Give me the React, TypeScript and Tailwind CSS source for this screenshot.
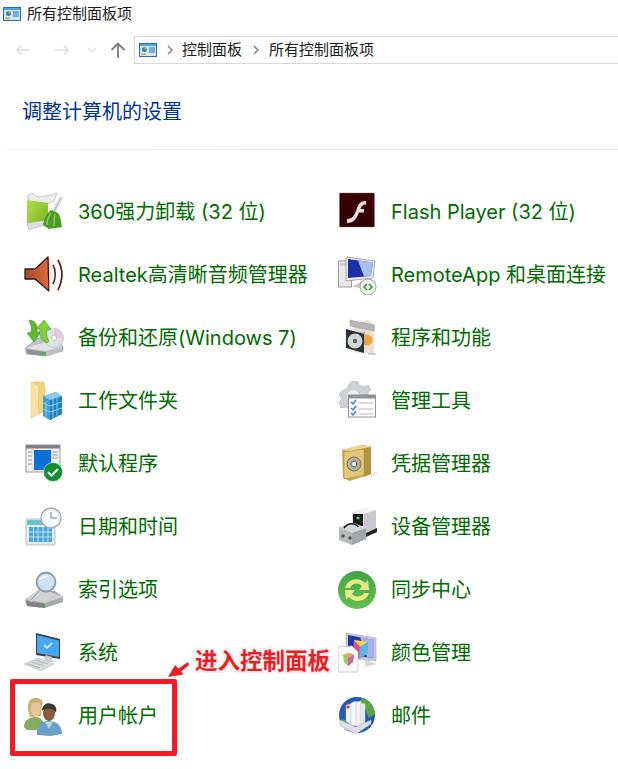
import type { ReactNode } from 'react';

const Ico = ({ children }: { children: ReactNode }) => (
  <svg viewBox="0 0 40 40" className="w-10 h-10 shrink-0">
    {children}
  </svg>
);

const Uninstall = () => (
  <Ico>
    <defs>
      <linearGradient id="un" x1="0" y1="0" x2="1" y2="1">
        <stop offset="0" stopColor="#b8e04e" />
        <stop offset="1" stopColor="#6eb01c" />
      </linearGradient>
    </defs>
    <path d="M3 4 L8 1 L14 5 L28 3 L33 1 L30 9 L24 12 L5 9 Z" fill="#ededed" stroke="#b5b5b5" strokeWidth="0.7" />
    <path d="M3 8 L24 11 L24 31 L5 37 L3 33 Z" fill="url(#un)" />
    <path d="M3 31 L24 28 L24 32 L5 38 Z" fill="#dedede" stroke="#aaa" strokeWidth="0.5" />
    <path d="M37 6 L29 21" stroke="#e4e4e4" strokeWidth="4.5" strokeLinecap="round" />
    <path d="M37 6 L29 21" stroke="#9e9e9e" strokeWidth="0.8" />
    <path d="M27 18 C22 22 20 28 19 33 L25 37 L38 35 C37 28 36 21 32 20 Z" fill="#4e9a28" />
    <path d="M27 21 C24 25 23 29 23 33 M31 22 C30 26 30 30 30 34" stroke="#8fd05c" strokeWidth="1.4" fill="none" />
  </Ico>
);

const Flash = () => (
  <Ico>
    <defs>
      <linearGradient id="fl" x1="0" y1="0" x2="0" y2="1">
        <stop offset="0" stopColor="#3c0000" />
        <stop offset="1" stopColor="#2e0000" />
      </linearGradient>
    </defs>
    <rect x="1.5" y="1" width="35" height="34" fill="url(#fl)" stroke="#777" strokeWidth="0.4" />
    <path d="M9 27 C15 27 17 22 19 16 C20.5 11.5 23 9 28 9 L28 12.5 C24.5 12.5 23.5 14.5 22.5 17 L26 17 L26 20.5 L21 20.5 C19 26 16 31 9 31 Z" fill="#ecdcdc" />
  </Ico>
);

const Speaker = () => (
  <Ico>
    <defs>
      <linearGradient id="sp" x1="0" y1="0" x2="1" y2="0">
        <stop offset="0" stopColor="#a8482a" />
        <stop offset="1" stopColor="#dc6a3e" />
      </linearGradient>
    </defs>
    <path d="M1 14 L11 14 L24 2 L25 36 L11 24 L1 24 Z" fill="url(#sp)" stroke="#2c1a14" strokeWidth="1.3" strokeLinejoin="round" />
    <path d="M26 3 L26 36" stroke="#f2d6c8" strokeWidth="1.2" />
    <path d="M29 10 C32 15 32 23 29 29" stroke="#5a2a1a" strokeWidth="1.6" fill="none" />
    <path d="M34 5 C39 14 39 25 34 35" stroke="#5a2a1a" strokeWidth="1.8" fill="none" />
  </Ico>
);

const Remote = () => (
  <Ico>
    <rect x="0.5" y="6" width="13" height="26" fill="#e9e9e9" stroke="#9a9a9a" />
    <rect x="2" y="8" width="10" height="3" fill="#c9d3dd" />
    <path d="M8 2 L37 6 L35 23 L8 26 Z" fill="#f0f0f0" stroke="#8a8a8a" strokeWidth="0.7" />
    <path d="M10 4 L35 7.5 L33 21 L10 23 Z" fill="#1a30a8" />
    <path d="M20 5.5 L35 7.5 L33 21 L26 21.5 Z" fill="#a9bdf0" />
    <path d="M14 32 L24 26 L24 33 Z" fill="#c9c9c9" />
    <circle cx="30" cy="32" r="8" fill="#f4f4f4" stroke="#a2a2a2" />
    <path d="M29 29 L26 32 L29 35" stroke="#2f9e2f" strokeWidth="1.6" fill="none" />
    <path d="M31 29 L34 32 L31 35" stroke="#2f9e2f" strokeWidth="1.6" fill="none" />
  </Ico>
);

const Backup = () => (
  <Ico>
    <path d="M1 30 L14 20 L30 20 L39 28 L39 33 L22 38 L3 36 Z" fill="#bfc3c6" stroke="#8c8c8c" strokeWidth="0.5" />
    <path d="M2 30 L22 33 L39 28 L22 24 Z" fill="#e0e2e4" />
    <path d="M2 31 L22 34 L22 38 L3 36 Z" fill="#8f9396" />
    <rect x="18" y="34" width="2" height="3" fill="#38c038" />
    <circle cx="30" cy="20" r="9.5" fill="#dfe3e6" stroke="#a8a8a8" strokeWidth="0.5" />
    <path d="M30 20 L30 10.5 A9.5 9.5 0 0 1 39 20 Z" fill="#e2c8dc" />
    <circle cx="30" cy="20" r="2.5" fill="#fff" stroke="#9c9c9c" strokeWidth="0.5" />
    <path d="M6 2 C13 4 14 8 13 14 L17 14 L10 24 L3 15 L7 14 C8 10 7 6 5 4 Z" fill="#5cba2e" stroke="#3d8f1c" strokeWidth="0.5" />
    <path d="M23 25 C16 22 15 17 16 11 L12 11 L20 2 L27 11 L23 12 C22 16 23 20 25 23 Z" fill="#7ccf3e" stroke="#3d8f1c" strokeWidth="0.5" />
  </Ico>
);

const Programs = () => (
  <Ico>
    <path d="M15 6 L30 2 L38 7 L36 13 L36 36 L16 34 Z" fill="#e4e1da" />
    <path d="M12 2 L36 7 L36 13 L12 8 Z" fill="#b6b6b4" stroke="#8a8a8a" strokeWidth="0.4" />
    <rect x="18" y="14" width="9" height="12" fill="#a9bd97" />
    <circle cx="29" cy="22" r="5.5" fill="#eda445" />
    <path d="M8 11 L26 16 L26 35 L8 30 Z" fill="#2a3036" />
    <circle cx="17" cy="23" r="7.5" fill="#d3d6d9" />
    <circle cx="17" cy="23" r="2.2" fill="#5a6066" />
    <path d="M30 35 L39 35 L37 37 L30 37 Z" fill="#cfcfcf" />
  </Ico>
);

const Folder = () => (
  <Ico>
    <path d="M7 1 L20 1 L21 8 L21 30 L7 37 Z" fill="#efd27e" stroke="#d4b25a" strokeWidth="0.5" />
    <path d="M7 1 L7 37 L14 33 L14 5 Z" fill="#f7e3a3" />
    <path d="M19 15 L32 11 L38 15 L38 33 L26 39 L19 35 Z" fill="#3d9cd4" />
    <path d="M26 19 L38 15 L38 33 L26 39 Z" fill="#1f7fbb" />
    <path d="M19 15 L32 11 L38 15 L26 19 Z" fill="#8ccbed" />
    <path d="M22 20 V36 M29 18 V37 M33 17 V35 M19 22 L26 25 L38 21 M19 28 L26 31 L38 27" stroke="#a5dcf5" strokeWidth="0.8" fill="none" />
  </Ico>
);

const Tools = () => (
  <Ico>
    <path d="M14 0 L20 0 L21 4 L26 6 L30 4 L33 8 L30 12 L30 14 L14 22 L14 30 L8 26 L3 27 L1 21 L4 18 L1 13 L5 9 L9 8 L11 3 Z" fill="#cfd2d4" stroke="#a9abad" strokeWidth="0.5" />
    <circle cx="15" cy="15" r="6" fill="#eef0f1" />
    <rect x="10.5" y="14" width="27" height="22" fill="#fff" stroke="#8f9296" strokeWidth="1" />
    <rect x="10.5" y="14" width="27" height="3.5" fill="#8f9296" />
    <path d="M13 21 L15 23 L18 19 M13 27 L15 29 L18 25 M13 32 L15 34 L18 30" stroke="#2f7ed8" strokeWidth="1.4" fill="none" />
    <path d="M21 22 H35 M21 28 H35 M21 33 H35" stroke="#b4b7ba" strokeWidth="1.2" />
  </Ico>
);

const Defaults = () => (
  <Ico>
    <rect x="2" y="1" width="34" height="27" fill="#f0f0f0" stroke="#9c9c9c" />
    <rect x="2" y="1" width="34" height="3.5" fill="#7e8288" />
    <path d="M4 8 H8 M4 12 H8 M4 16 H8 M4 20 H8 M28 8 H34 M28 11 H34 M28 14 H34" stroke="#9a9a9a" strokeWidth="1" />
    <rect x="10" y="6" width="17" height="20" fill="#0b6fd8" />
    <circle cx="29" cy="28" r="9.5" fill="#0e8f2e" stroke="#e9f5ea" strokeWidth="0.6" />
    <path d="M24 28 L27.5 31.5 L34 25" stroke="#fff" strokeWidth="2.2" fill="none" />
  </Ico>
);

const Safe = () => (
  <Ico>
    <path d="M4 6 L24 1 L33 3 L33 30 L12 37 L5 34 Z" fill="#c9a54c" />
    <path d="M24 1 L33 3 L33 30 L26 33 Z" fill="#b39340" />
    <path d="M4 6 L24 1 L33 3 L12 7 Z" fill="#ead68c" />
    <path d="M6 8 L26 5 L26 31 L6 35 Z" fill="#e0c878" stroke="#b4933e" strokeWidth="0.5" />
    <circle cx="16" cy="20" r="7" fill="#b0ae9e" stroke="#77735f" />
    <circle cx="16" cy="20" r="2.8" fill="#e4e4e0" stroke="#77735f" />
    <path d="M33 30 L39 27 L39 29 L33 33 Z" fill="#e2e2e2" />
  </Ico>
);

const Calendar = () => (
  <Ico>
    <rect x="2" y="12" width="29" height="26" rx="1" fill="#e8edf0" stroke="#b9bfc4" />
    <rect x="3" y="13" width="27" height="5" fill="#6ac1cf" />
    <path d="M5 20 H28 V35 H5 Z" fill="#48a9d8" />
    <path d="M9.5 20 V35 M14 20 V35 M19 20 V35 M24 20 V35 M5 25 H28 M5 30 H28" stroke="#d8eef8" strokeWidth="0.8" />
    <circle cx="27" cy="11" r="10" fill="#eceff1" stroke="#a8adb2" strokeWidth="1.3" />
    <circle cx="27" cy="11" r="7.5" fill="#f8f9fa" />
    <path d="M27 5 V11 H33" stroke="#5f7a90" strokeWidth="0.9" fill="none" />
  </Ico>
);

const Devices = () => (
  <Ico>
    <path d="M14 5 L27 1 L38 3 L38 22 L26 26 L14 22 Z" fill="#e2e2e4" />
    <path d="M14 5 L27 1 L38 3 L26 7 Z" fill="#f2f2f3" />
    <path d="M26 7 L38 3 L38 22 L26 26 Z" fill="#c8c9cc" />
    <rect x="15" y="7" width="10" height="12" fill="#1b1b1b" />
    <circle cx="20" cy="11" r="1.6" fill="#35e06a" />
    <path d="M28 26 L39 21 L39 25 L28 30 Z" fill="#222" />
    <path d="M1 20 L16 16 L28 21 L28 32 L14 38 L1 33 Z" fill="#b9babe" />
    <path d="M14 38 L14 26 L28 21 L28 32 Z" fill="#a4a5aa" />
    <path d="M1 20 L16 16 L28 21 L14 26 Z" fill="#d7d8da" />
    <path d="M6 21 C10 15 18 16 20 20" stroke="#111" strokeWidth="1.6" fill="none" />
    <circle cx="5" cy="29" r="1.8" fill="#55565a" />
    <circle cx="12" cy="31" r="1.8" fill="#55565a" />
  </Ico>
);

const Search = () => (
  <Ico>
    <path d="M1 30 L13 21 L31 21 L39 27 L39 32 L21 38 L3 36 Z" fill="#a7abae" />
    <path d="M1 29 L21 33 L39 27 L24 21 L13 21 Z" fill="#cfd1d3" />
    <path d="M2 31 L21 34 L21 38 L3 36 Z" fill="#7e8286" />
    <rect x="19" y="34" width="2" height="3.5" fill="#2fb84a" />
    <path d="M7 30 L16 20" stroke="#d0d2d4" strokeWidth="3.5" strokeLinecap="round" />
    <path d="M7 30 L16 20" stroke="#888" strokeWidth="0.8" />
    <circle cx="22" cy="12" r="9.5" fill="#cfe2f4" stroke="#8f9aa3" strokeWidth="1.8" />
    <path d="M15 10 C17 6 22 5 26 6 C22 7 18 9 15 10 Z" fill="#fff" />
  </Ico>
);

const SyncIco = () => (
  <Ico>
    <defs>
      <linearGradient id="sy" x1="0" y1="0" x2="0" y2="1">
        <stop offset="0" stopColor="#3fa544" />
        <stop offset="1" stopColor="#64c052" />
      </linearGradient>
    </defs>
    <circle cx="19" cy="20" r="19" fill="url(#sy)" />
    <path d="M7 18 C9 9 21 6 27 13 L30 10 L31 20 L21 20 L24 16 C20 12 14 13 12 18 Z" fill="#e9ea86" />
    <path d="M31 23 C29 31 17 34 11 27 L8 30 L7 20 L17 20 L14 24 C18 28 24 27 26 23 Z" fill="#e9ea86" />
  </Ico>
);

const Computer = () => (
  <Ico>
    <path d="M12 0 L36 6 L36 26 L12 22 Z" fill="#3a3f44" />
    <path d="M13 2 L35 7.5 L35 24 L13 20 Z" fill="#46a8f5" />
    <path d="M20 12 L23 15 L28 10" stroke="#e8f5ff" strokeWidth="1.5" fill="none" />
    <path d="M22 22 L28 24 L28 27 L33 29 L24 29 L20 26 Z" fill="#c8cccf" />
    <path d="M0 31 L14 25 L30 31 L17 38 Z" fill="#d8dbdd" stroke="#b5b9bc" strokeWidth="0.5" />
    <path d="M4 31 L16 35 M8 29 L20 33 M12 27 L24 31" stroke="#a3a7aa" strokeWidth="0.7" />
  </Ico>
);

const ColorIco = () => (
  <Ico>
    <path d="M8 0 L38 5 L38 28 L8 25 Z" fill="#c9ccd0" stroke="#9ea1a4" strokeWidth="0.5" />
    <path d="M10 2 L36 7 L36 25 L10 22 Z" fill="#1d3aa8" />
    <path d="M22 4 L36 7 L36 25 L29 24 Z" fill="#a5b3e6" />
    <path d="M16 7 L30 9 L29 21 L21 26 L15 17 Z" fill="#e04a90" />
    <path d="M16 7 L30 9 L22 14 Z" fill="#f6d44e" />
    <path d="M22 14 L30 9 L29 21 L21 26 Z" fill="#57b6e8" />
    <path d="M27 27 L39 31 L27 34 Z" fill="#d8d8d8" />
    <path d="M0 14 L14 13 L20 19 L20 39 L0 39 Z" fill="#fbfbfb" stroke="#b9b9b9" strokeWidth="0.6" />
    <path d="M5 22 L11 20 L16 22 L15 29 L10 33 L6 29 Z" fill="#8fd068" />
    <path d="M5 22 L11 20 L16 22 L10 25 Z" fill="#f0a04a" />
    <path d="M10 25 L16 22 L15 29 L10 33 Z" fill="#d860b0" />
  </Ico>
);

const Users = () => (
  <Ico>
    <path d="M0 31 C0 24 6 21 11 21 C16 21 20 24 20 31 L14 34 L3 34 Z" fill="#86ad5f" />
    <path d="M4 14 C3 5 8 1 13 2 C18 3 20 6 18 10 L17 20 L6 21 Z" fill="#c6b26d" />
    <ellipse cx="12" cy="13" rx="5.5" ry="7" fill="#e6c39c" />
    <path d="M13 39 C12 30 16 25 25 25 C33 25 38 30 38 38 L26 40 Z" fill="#6c9fca" />
    <path d="M21 26 L25 33 L29 26 Z" fill="#b8d4ea" />
    <ellipse cx="25" cy="17" rx="6" ry="8" fill="#8a5a3c" />
    <path d="M18 15 C18 8 24 6 28 8 C32 9 33 13 32 17 C30 12 24 12 19 14 Z" fill="#3a3a36" />
  </Ico>
);

const Mail = () => (
  <Ico>
    <circle cx="19" cy="19" r="18" fill="#2659b5" />
    <path d="M24 2 C32 4 36 10 37 18 L31 22 L27 13 L20 8 Z" fill="#5aa83f" />
    <path d="M3 24 C8 22 10 28 13 34 L9 35 C6 32 4 28 3 24 Z" fill="#5aa83f" />
    <path d="M8 9 L13 8 L13 29 L8 25 Z" fill="#f2f4f7" stroke="#c0c8d2" strokeWidth="0.5" />
    <path d="M13 7 L18 5 L18 30 L13 29 Z" fill="#fafbfc" stroke="#c0c8d2" strokeWidth="0.5" />
    <path d="M18 6 L23 5 L23 30 L18 30 Z" fill="#f2f4f7" stroke="#c0c8d2" strokeWidth="0.5" />
    <path d="M23 7 L27 8 L27 28 L23 29 Z" fill="#e6eaef" stroke="#c0c8d2" strokeWidth="0.5" />
    <rect x="8.5" y="9.5" width="3" height="3" fill="#e53b30" />
    <path d="M2 24 L18 31 L33 24 L33 28 L18 38 L2 30 Z" fill="#dde1e6" stroke="#aab2bb" strokeWidth="0.5" />
  </Ico>
);

const Panel = ({ size }: { size: string }) => (
  <svg viewBox="0 0 18 14" className={size}>
    <rect x="0.5" y="0.5" width="17" height="13" fill="#cfe8fa" stroke="#1f6fae" />
    <rect x="1" y="1" width="16" height="2" fill="#4ea6e4" />
    <circle cx="5.5" cy="6.5" r="2.5" fill="#2b7fc4" />
    <path d="M5.5 6.5 V4 A2.5 2.5 0 0 1 8 6.5 Z" fill="#f0a12c" />
    <path d="M10 5 H16 M10 7 H16 M10 9 H16" stroke="#1f6fae" strokeWidth="1" />
    <rect x="2" y="10.5" width="5" height="1.5" fill="#e8a32e" />
  </svg>
);

const items: [ReactNode, string, ReactNode, string][] = [
  [<Uninstall />, '360强力卸载 (32 位)', <Flash />, 'Flash Player (32 位)'],
  [<Speaker />, 'Realtek高清晰音频管理器', <Remote />, 'RemoteApp 和桌面连接'],
  [<Backup />, '备份和还原(Windows 7)', <Programs />, '程序和功能'],
  [<Folder />, '工作文件夹', <Tools />, '管理工具'],
  [<Defaults />, '默认程序', <Safe />, '凭据管理器'],
  [<Calendar />, '日期和时间', <Devices />, '设备管理器'],
  [<Search />, '索引选项', <SyncIco />, '同步中心'],
  [<Computer />, '系统', <ColorIco />, '颜色管理'],
  [<Users />, '用户帐户', <Mail />, '邮件'],
];

const Item = ({ icon, label, right }: { icon: ReactNode; label: string; right?: boolean }) => (
  <div className={`flex items-center h-[63px] whitespace-nowrap text-[20px] text-[#006b00] ${right ? 'gap-[13px]' : 'gap-[14px]'}`}>
    {icon}
    <span>{label}</span>
  </div>
);

export default function App() {
  return (
    <div className="relative w-[618px] h-[769px] overflow-hidden bg-white font-['Inter','Noto_Sans_CJK_SC',sans-serif]">
      <div className="flex items-center gap-[6px] h-[28px] pl-[3px] text-[15px] text-[#1a1a1a]">
        <Panel size="w-[18px] h-[14px]" />
        <span>所有控制面板项</span>
      </div>

      <div className="flex items-center h-[28px] mt-[8px]">
        <div className="flex items-center w-[134px] shrink-0 pl-[15px]">
          <svg viewBox="0 0 18 14" className="w-[16px] h-[14px]">
            <path d="M17 7 H2 M7 2 L2 7 L7 12" stroke="#dcdcdc" strokeWidth="1.6" fill="none" />
          </svg>
          <svg viewBox="0 0 18 14" className="w-[16px] h-[14px] ml-[23px]">
            <path d="M1 7 H16 M11 2 L16 7 L11 12" stroke="#dcdcdc" strokeWidth="1.6" fill="none" />
          </svg>
          <svg viewBox="0 0 10 6" className="w-[10px] h-[6px] ml-[17px]">
            <path d="M1 1 L5 5 L9 1" stroke="#dcdcdc" strokeWidth="1.3" fill="none" />
          </svg>
          <svg viewBox="0 0 16 16" className="w-[16px] h-[16px] ml-[13px]">
            <path d="M8 16 V2 M1.5 8 L8 1.5 L14.5 8" stroke="#7d7d7d" strokeWidth="1.8" fill="none" />
          </svg>
        </div>
        <div className="flex items-center flex-1 h-[28px] pl-[4px] border border-r-0 border-[#d9d9d9] text-[15px] text-[#1a1a1a]">
          <Panel size="w-[18px] h-[14px]" />
          <svg viewBox="0 0 6 10" className="w-[6px] h-[10px] ml-[10px]">
            <path d="M1 1 L5 5 L1 9" stroke="#808080" strokeWidth="1.4" fill="none" />
          </svg>
          <span className="ml-[9px]">控制面板</span>
          <svg viewBox="0 0 6 10" className="w-[6px] h-[10px] ml-[11px]">
            <path d="M1 1 L5 5 L1 9" stroke="#808080" strokeWidth="1.4" fill="none" />
          </svg>
          <span className="ml-[10px]">所有控制面板项</span>
        </div>
      </div>

      <h1 className="mt-[34px] ml-[22px] text-[20px] leading-[28px] font-normal text-[#003399]">调整计算机的设置</h1>
      <div className="mt-[23px] h-px bg-gradient-to-r from-[#f4f9fd] via-[#d8e6f3] to-[#d8e6f3]" />

      <div className="mt-[30px] grid grid-cols-[314px_1fr] pl-[24px]">
        {items.map(([a, la, b, lb]) => (
          <div key={la} className="contents">
            <Item icon={a} label={la} />
            <Item icon={b} label={lb} right />
          </div>
        ))}
      </div>

      {/* red note drawn over the list */}
      <div className="absolute left-[10px] top-[679px] w-[167px] h-[77px] rounded-[2px] border-[5px] border-[#ee1c25]" />
      <svg viewBox="0 0 24 24" className="absolute left-[167px] top-[658px] w-[24px] h-[24px]">
        <path d="M1 19 L8 7 L11.5 10.5 L21 4 L22 7 L14 13.5 L16.5 16.5 Z" fill="#ee1c25" />
      </svg>
      <div className="absolute left-[195px] top-[645px] text-[22.5px] leading-[32px] font-bold text-[#ee1c25] whitespace-nowrap [text-shadow:-2px_0_#eee,2px_0_#eee,0_-2px_#eee,0_2px_#eee,-1.5px_-1.5px_#eee,1.5px_1.5px_#eee,-1.5px_1.5px_#eee,1.5px_-1.5px_#eee]">
        进入控制面板
      </div>
    </div>
  );
}
